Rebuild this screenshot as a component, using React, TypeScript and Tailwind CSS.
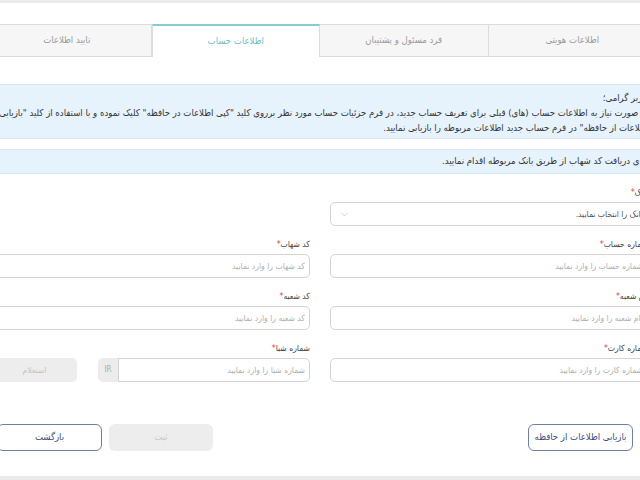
import { ChevronDown } from "lucide-react"

const tabs = [
  { title: "اطلاعات هویتی", active: false },
  { title: "فرد مسئول و پشتیبان", active: false },
  { title: "اطلاعات حساب", active: true },
  { title: "تایید اطلاعات", active: false },
]

function Label({ text }: { text: string }) {
  return (
    <div className="h-[14px] mb-[3px] text-[8.5px] leading-[14px] text-[#444] whitespace-nowrap">
      {text}
      <span className="text-[#e53935]">*</span>
    </div>
  )
}

function TextField({ label, placeholder }: { label: string; placeholder: string }) {
  return (
    <div>
      <Label text={label} />
      <input
        placeholder={placeholder}
        className="block w-full h-[24px] rounded-[5px] border border-[#d4d4d4] bg-white px-[4px] text-[8.5px] outline-none placeholder:text-[#b0b0b0]"
      />
    </div>
  )
}

export default function App() {
  return (
    <div
      className="w-[640px] h-[480px] overflow-hidden bg-white flex flex-col"
      style={{ fontFamily: '"DejaVu Sans Condensed", "DejaVu Sans", sans-serif' }}
    >
      <div className="h-[3px] bg-[#ebebeb] shrink-0" />
      <div dir="rtl" className="w-[674px] -mx-[17px] flex-1 flex flex-col">
        <div className="mt-[21px] grid grid-cols-4 h-[33px]">
          {tabs.map((t) =>
            t.active ? (
              <div
                key={t.title}
                className="flex items-center justify-center border-t-2 border-t-[#7fcfd5] border-x border-x-[#dcdcdc] bg-white text-[9.5px] text-[#6cbfc6]"
              >
                {t.title}
              </div>
            ) : (
              <div
                key={t.title}
                className="flex items-center justify-center border border-[#dcdcdc] -ml-px bg-[#f6f6f6] text-[9.5px] text-[#9a9a9a]"
              >
                {t.title}
              </div>
            )
          )}
        </div>

        <div className="mt-[27px] h-[55px] border-y border-[#d5e7f5] bg-[#e6f3fd] px-[8px] py-[5px] text-[9.5px] leading-[15px] text-[#333] whitespace-nowrap">
          <div>کاربر گرامی؛</div>
          <div>
            در صورت نیاز به اطلاعات حساب (های) قبلی برای تعریف حساب جدید، در فرم جزئیات حساب مورد نظر برروی کلید "کپی اطلاعات در حافظه" کلیک نموده و با استفاده از کلید "بازیابی
          </div>
          <div>اطلاعات از حافظه" در فرم حساب جدید اطلاعات مربوطه را بازیابی نمایید.</div>
        </div>

        <div className="mt-[10px] h-[25px] border-y border-[#d5e7f5] bg-[#e6f3fd] px-[8px] flex items-center text-[9.5px] text-[#333] whitespace-nowrap">
          برای دریافت کد شهاب از طریق بانک مربوطه اقدام نمایید.
        </div>

        <div className="mt-[11px] px-[9px] grid grid-cols-2 gap-x-[20px] gap-y-[11px]">
          <div>
            <Label text="بانک" />
            <div className="h-[24px] rounded-[5px] border border-[#d4d4d4] bg-white px-[4px] flex items-center justify-between text-[8.5px] text-[#555]">
              <span>بانک را انتخاب نمایید.</span>
              <ChevronDown className="w-[11px] h-[11px] text-[#bdbdbd] ml-[4px]" strokeWidth={1.5} />
            </div>
          </div>
          <div />

          <TextField label="شماره حساب" placeholder="شماره حساب را وارد نمایید" />
          <TextField label="کد شهاب" placeholder="کد شهاب را وارد نمایید" />

          <TextField label="نام شعبه" placeholder="نام شعبه را وارد نمایید" />
          <TextField label="کد شعبه" placeholder="کد شعبه را وارد نمایید" />

          <TextField label="شماره کارت" placeholder="شماره کارت را وارد نمایید" />
          <div>
            <Label text="شماره شبا" />
            <div className="flex gap-[21px]">
              <div className="flex-1 flex">
                <input
                  placeholder="شماره شبا را وارد نمایید"
                  className="block flex-1 min-w-0 h-[24px] rounded-r-[5px] border border-[#d4d4d4] bg-white px-[4px] text-[8.5px] outline-none placeholder:text-[#b0b0b0]"
                />
                <div dir="ltr" className="w-[20px] h-[24px] rounded-l-[5px] bg-[#ececec] flex items-center justify-center text-[8px] text-[#aaa]">
                  IR
                </div>
              </div>
              <button className="w-[85px] h-[24px] rounded-[5px] bg-[#ededed] text-[8.5px] text-[#c4c4c4]">
                استعلام
              </button>
            </div>
          </div>
        </div>

        <div className="mt-[42px] pr-[24px] pl-[14px] flex justify-between">
          <button className="w-[105px] h-[27px] rounded-[6px] border border-[#6f7fa5] text-[9.5px] text-[#3d4d7d] bg-white whitespace-nowrap">
            بازیابی اطلاعات از حافظه
          </button>
          <div className="flex gap-[7px]">
            <button className="w-[104px] h-[27px] rounded-[6px] bg-[#ededed] text-[9.5px] text-[#c8c8c8]">
              ثبت
            </button>
            <button className="w-[105px] h-[27px] rounded-[6px] border border-[#6f7fa5] text-[9.5px] text-[#3d4d7d] bg-white">
              بازگشت
            </button>
          </div>
        </div>

        <div className="flex-1" />
      </div>
      <div className="h-[4px] bg-[#ebebeb] shrink-0" />
    </div>
  )
}
